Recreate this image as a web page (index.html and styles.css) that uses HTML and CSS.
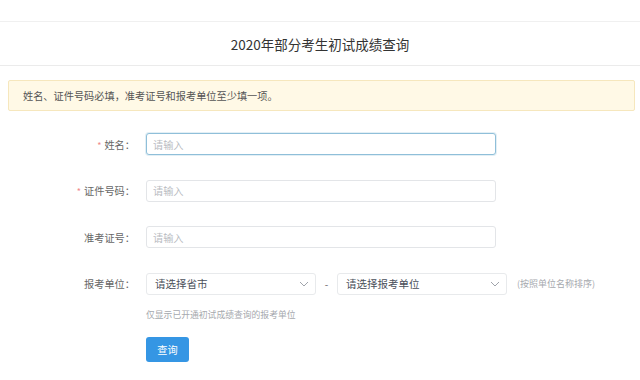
FILE: index.html
```html
<!DOCTYPE html>
<html lang="zh-CN">
<head>
    <meta charset="UTF-8">
    <title>2020年部分考生初试成绩查询</title>
    <link rel="stylesheet" href="styles.css">
</head>
<body>

    <!-- 标题 -->
    <div class="page-title">
        <h1>2020年部分考生初试成绩查询</h1>
    </div>

    <!-- 提示 -->
    <div class="notice">姓名、证件号码必填，准考证号和报考单位至少填一项。</div>

    <form class="query-form">
        <div class="form-row">
            <label class="form-label required">姓名：</label>
            <input class="form-input is-focus" type="text" placeholder="请输入">
        </div>
        <div class="form-row">
            <label class="form-label required">证件号码：</label>
            <input class="form-input" type="text" placeholder="请输入">
        </div>
        <div class="form-row">
            <label class="form-label">准考证号：</label>
            <input class="form-input" type="text" placeholder="请输入">
        </div>
        <div class="form-row">
            <label class="form-label">报考单位：</label>
            <div class="form-select">
                <span>请选择省市</span>
                <svg class="arrow" width="10" height="6" viewBox="0 0 10 6"><path d="M1 1l4 4 4-4" fill="none" stroke="#a0a4ab" stroke-width="1"/></svg>
            </div>
            <span class="dash">-</span>
            <div class="form-select">
                <span>请选择报考单位</span>
                <svg class="arrow" width="10" height="6" viewBox="0 0 10 6"><path d="M1 1l4 4 4-4" fill="none" stroke="#a0a4ab" stroke-width="1"/></svg>
            </div>
            <span class="hint">(按照单位名称排序)</span>
        </div>
        <p class="form-help">仅显示已开通初试成绩查询的报考单位</p>
        <div class="form-actions">
            <button class="btn-primary" type="button">查询</button>
        </div>
    </form>

</body>
</html>
```

FILE: styles.css
```css
/* 基础 */
body {
    margin: 0;
    background: #fff;
    color: #515a6e;
    font-family: "Noto Sans CJK SC", "Noto Sans", sans-serif;
}

/* 标题栏 */
.page-title {
    margin-top: 21px;
    border-top: 1px solid #f0f0f0;
    border-bottom: 1px solid #ebebeb;
    height: 43px;
    display: flex;
    align-items: center;
    justify-content: center;
}

.page-title h1 {
    margin: 0;
    font-size: 13.5px;
    font-weight: normal;
    color: #333;
}

/* 黄色提示 */
.notice {
    margin: 14px 5px 0 8px;
    height: 29px;
    line-height: 29px;
    padding-left: 14px;
    background: #fff9e6;
    border: 1px solid #f6e7bd;
    border-radius: 2px;
    font-size: 10.2px;
    color: #555;
}

/* 表单 */
.query-form {
    margin-top: 22px;
}

.form-row {
    display: flex;
    align-items: center;
    height: 22px;
    margin-bottom: 24.5px;
}

.form-label {
    width: 146px;
    padding-right: 11px;
    box-sizing: border-box;
    text-align: right;
    font-size: 10.2px;
    color: #666;
}

.required::before {
    content: "*";
    color: #f08a8a;
    margin-right: 3px;
    font-size: 9px;
}

.form-input {
    width: 350px;
    height: 22px;
    box-sizing: border-box;
    padding: 0 6px;
    border: 1px solid #e3e5e8;
    border-radius: 3px;
    font-family: inherit;
    font-size: 10.2px;
    color: #515a6e;
    outline: none;
}

.form-input::placeholder {
    color: #b9bcc2;
}

.form-input.is-focus {
    border-color: #8fbfd9;
    box-shadow: 0 0 0 1px rgba(143, 191, 217, 0.25);
}

/* 下拉框 */
.form-select {
    width: 170px;
    height: 22px;
    box-sizing: border-box;
    padding: 0 6px 0 8px;
    border: 1px solid #e8eaec;
    border-radius: 3px;
    display: flex;
    align-items: center;
    justify-content: space-between;
    font-size: 10.5px;
    color: #4a4f5a;
}

.dash {
    width: 21px;
    text-align: center;
    font-size: 10px;
    color: #666;
}

.hint {
    margin-left: 10px;
    font-size: 9px;
    color: #a6a9ae;
}

.form-help {
    margin: -11px 0 0 146px;
    font-size: 8.8px;
    color: #a6a9ae;
}

.form-actions {
    margin: 14px 0 0 146px;
}

.btn-primary {
    width: 43px;
    height: 25px;
    border: none;
    border-radius: 3px;
    background: #3596e4;
    color: #fff;
    font-family: inherit;
    font-size: 10.2px;
    padding: 0;
}
```
